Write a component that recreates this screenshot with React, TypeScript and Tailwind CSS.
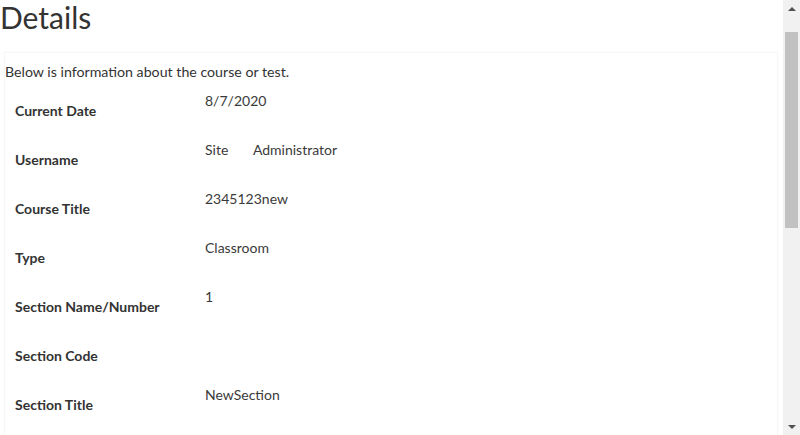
const rows: [string, string][] = [
  ["Current Date", "8/7/2020"],
  ["Username", "Site       Administrator"],
  ["Course Title", "2345123new"],
  ["Type", "Classroom"],
  ["Section Name/Number", "1"],
  ["Section Code", ""],
  ["Section Title", "NewSection"],
];

export default function App() {
  return (
    <div className="flex h-[435px] w-[800px] overflow-hidden bg-white text-[#333] font-['Source_Sans_Pro','Lato',sans-serif]">
      <div className="flex-1 overflow-hidden">
        <h1 className="text-[30px] leading-[34px] font-normal">Details</h1>
        <div className="ml-1 mr-[5px] mt-[18px] border border-[#f6f6f6] shadow-[0_0_2px_rgba(0,0,0,0.03)] pt-[9px] pb-[60px]">
          <p className="text-[14.2px] leading-[20px]">Below is information about the course or test.</p>
          <div className="flex flex-col">
            {rows.map(([label, value]) => (
              <div key={label} className="flex h-[49px]">
                <div className="w-[200px] pl-[10px] pt-[19px] text-[14px] leading-[20px] font-bold">{label}</div>
                <div className="pt-[9px] text-[14px] leading-[20px] text-[#3a3a3a] whitespace-pre">{value}</div>
              </div>
            ))}
          </div>
        </div>
      </div>
      <div className="flex w-[17px] flex-col bg-[#f1f1f1]">
        <div className="flex h-[17px] items-center justify-center">
          <div className="h-0 w-0 border-x-[4px] border-b-[4px] border-x-transparent border-b-[#505050]" />
        </div>
        <div className="flex-1 px-[2px] pt-[15px]">
          <div className="h-[196px] bg-[#c1c1c1]" />
        </div>
        <div className="flex h-[17px] items-center justify-center">
          <div className="h-0 w-0 border-x-[4px] border-t-[4px] border-x-transparent border-t-[#505050]" />
        </div>
      </div>
    </div>
  );
}
